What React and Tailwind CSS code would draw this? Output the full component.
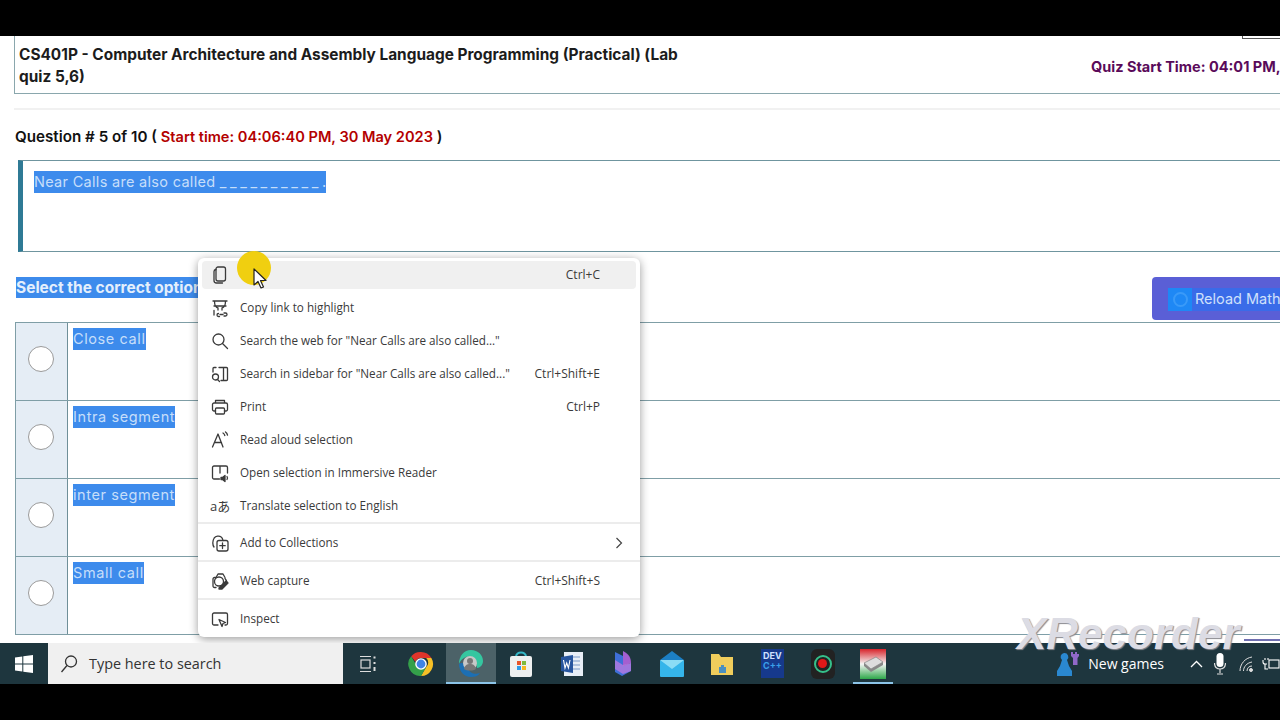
import React from "react";

const S = { fill: "none", stroke: "#3a3a3a", strokeWidth: 1.3, strokeLinecap: "round", strokeLinejoin: "round" };
const Ic = ({ children }) => <svg width="20" height="20" viewBox="0 0 20 20" {...S}>{children}</svg>;

const menuIcons = {
  copy: <Ic><rect x="6" y="2" width="9.500" height="14" rx="2" /><path d="M6 4.500c-1.200.2-2 1-2 2v9c0 1.500 1 2.500 2.500 2.500h6" /></Ic>,
  link: <Ic><path d="M3 3h14M4.500 3c0 4 1.500 6.500 3.500 7M15.500 3c0 4-1.500 6.500-3.500 7M8 10v2M12 10v2M4 8h12" /><path d="M4 12.500v4.500M10 16.500h3M8.500 15.500a1.500 1.500 0 1 0 0 3h1M14 15h1.500a1.500 1.500 0 0 1 0 3H14" /></Ic>,
  search: <Ic><circle cx="8.500" cy="8.500" r="5.500" /><path d="M12.500 12.500l5 5" /></Ic>,
  sidebar: <Ic><path d="M9 3.500h7.500a1 1 0 0 1 1 1v11a1 1 0 0 1-1 1H11M3 8V4.500a1 1 0 0 1 1-1h2M13.500 4v12" /><circle cx="5.500" cy="13" r="3" /><path d="M7.500 15.500l2 2" /></Ic>,
  print: <Ic><path d="M5.500 6V3.500h9V6M5.500 14H4a1.500 1.500 0 0 1-1.500-1.500v-5A1.500 1.500 0 0 1 4 6h12a1.500 1.500 0 0 1 1.500 1.500v5A1.500 1.500 0 0 1 16 14h-1.500" /><rect x="5.500" y="11" width="9" height="6" rx="1" /></Ic>,
  read: <Ic><path d="M2.500 17L8 4l5 13M4.500 12.500h7M13 3c1 .6 1.500 1.400 1.800 2.500M15.500 2c1.200.9 1.800 1.900 2 3.200" /></Ic>,
  reader: <Ic><path d="M9.500 16H4a1.500 1.500 0 0 1-1.500-1.500v-10A1.500 1.500 0 0 1 4 3h12a1.500 1.500 0 0 1 1.500 1.500V10M10 3v7" /><path d="M11 14.500h1.500l2.500-2v6l-2.500-2H11z" fill="#3a3a3a" /><path d="M17 13.500c.7 1 .7 2 0 3" /></Ic>,
  coll: <Ic><rect x="7" y="7.500" width="11" height="10.500" rx="2" /><path d="M12.500 10v5.500M9.800 12.700h5.400M4 14c-1.500-2-1.800-6 .2-9 1.500-2 5-2.500 7-1 1 .7 1.500 1.800 1.800 3.500" /></Ic>,
  capture: <Ic><path d="M6 16.500H4.500A1.500 1.500 0 0 1 3 15V8a1.500 1.500 0 0 1 1.500-1.500H6L8 3h5l2 3.500M15 7.500c1.500 1.500 2 3 2 4.500" /><circle cx="9" cy="10.500" r="4.500" /><path d="M9 17l7-7 2 2-6 6H9z" fill="#3a3a3a" /></Ic>,
  inspect: <Ic><path d="M8 16H4a1.500 1.500 0 0 1-1.500-1.500v-9A1.500 1.500 0 0 1 4 4h12a1.500 1.500 0 0 1 1.500 1.500v9A1.500 1.500 0 0 1 16 16h-1" /><path d="M9 10.500l6.500 3-2.500 1-1 3z" /></Ic>,
  translate: (
    <span className="w-[20px] text-center text-[13px] leading-[20px] text-[#3a3a3a] whitespace-nowrap font-['Open_Sans','Noto_Sans_CJK_JP',sans-serif]">aあ</span>
  ),
};

const Body = ({ icon, label, keys, arrow }) => (
  <>
    <div className="w-[36px] flex items-center justify-center shrink-0">{menuIcons[icon]}</div>
    <div className="ml-[2px] flex-1 whitespace-nowrap text-[11.700px]">{label}</div>
    {keys && <div className="pr-[36px] whitespace-nowrap">{keys}</div>}
    {arrow && (
      <svg width="8" height="12" viewBox="0 0 8 12" className="mr-[13px]" fill="none" stroke="#444" strokeWidth="1.200"><path d="M1.500 1l5 5-5 5" /></svg>
    )}
  </>
);

const Row = ({ highlight, ...p }) => (
  <div className="h-[33px] flex items-center">
    <div className={`mx-1 h-[28px] w-[434px] rounded-sm flex items-center ${highlight ? "bg-[#f0f0f0]" : ""}`}>
      <Body {...p} />
    </div>
  </div>
);

const Row2 = (p) => (
  <div className="h-[38px] border-t-2 border-[#ececec] flex items-center pt-px">
    <div className="mx-1 w-[434px] flex items-center">
      <Body {...p} />
    </div>
  </div>
);

const Option = ({ label }) => (
  <div className="h-[78px] flex border-b border-[#7f9ea6]">
    <div className="w-[52px] shrink-0 bg-[#e5edf5] border-r border-[#6f8f98] flex items-center justify-center pb-[6px] pr-px">
      <div className="w-[26px] h-[26px] rounded-full bg-white border-[1.500px] border-[#9a9a9a]" />
    </div>
    <div className="pl-[5px] pt-[5px] flex items-start">
      <span className="h-[22px] leading-[22px] bg-[#3d8bec] text-[#c6defa] text-[14.500px] tracking-[0.6px] whitespace-nowrap">{label}</span>
    </div>
  </div>
);

const Slot = ({ children, active, under, narrow }) => (
  <div className={`w-[50.200px] h-[41px] shrink-0 flex items-center justify-center relative ${active ? "bg-[#4c6268]" : ""}`}>
    {children}
    {under && <div className={`absolute bottom-0 h-[2.500px] bg-[#8cc4e8] ${narrow ? "left-[5px] right-[5px]" : "left-0 right-0"}`} />}
  </div>
);

export default function App() {
  return (
    <div className="w-[1280px] h-[720px] overflow-hidden bg-black flex flex-col font-['Inter','Liberation_Sans',sans-serif]">
      <div className="h-[36px] shrink-0 bg-black" />

      <div className="h-[607px] shrink-0 bg-white relative overflow-hidden">
        <div className="absolute right-0 top-0 w-[38px] h-[3px] border-l border-b border-[#555]" />

        <div className="ml-[14px] h-[58px] pt-[2px] border-l border-b border-[#8aa7ad] flex items-center overflow-hidden">
          <div className="w-[1076px] shrink-0 pl-[4px] text-[15.400px] leading-[22px] font-bold text-[#1c1c1c]">
            CS401P - Computer Architecture and Assembly Language Programming (Practical) (Lab<br />quiz 5,6)
          </div>
          <div className="shrink-0 mt-[2px] whitespace-nowrap text-[14.500px] font-bold text-[#5a0a5a]">Quiz Start Time: 04:01 PM,</div>
        </div>

        <div className="mt-[14px] h-[2px] bg-[#f1f1f1] ml-[14px]" />

        <div className="mt-[16px] h-[22px] pl-[15px] leading-[22px] text-[15.200px] font-semibold text-[#111] whitespace-nowrap">
          Question # 5 of 10 ( <span className="text-[14.600px] text-[#b30000]">Start time: 04:06:40 PM, 30 May 2023</span> )
        </div>

        <div className="mt-[12px] ml-[18px] h-[92px] border-l-[5px] border-[#2f7a95] border-t border-b border-t-[#6f959f] border-b-[#6f959f] pl-[11px] pt-[10px] flex items-start">
          <span className="h-[22px] leading-[22px] bg-[#3d8bec] text-[#c6defa] text-[14.500px] tracking-[0.3px] whitespace-nowrap">
            Near Calls are also called <span className="tracking-[3.600px]">__________</span>.
          </span>
        </div>

        <div className="mt-[25px] h-[45px] pl-[16px] flex items-start relative">
          <span className="h-[21px] leading-[21px] bg-[#3d8bec] text-[#e4effc] text-[15.500px] font-bold whitespace-nowrap">Select the correct option</span>
          <div className="absolute left-[1152px] top-0 w-[140px] h-[43px] rounded bg-[#5a5fd6] flex items-center pl-[16px] pt-px">
            <div className="flex items-center h-[23px] bg-[#3a6be8]">
              <div className="w-[24px] h-[23px] bg-[#1e88f5] flex items-center justify-center">
                <div className="w-[15px] h-[15px] rounded-full border-2 border-[#3a9af8]" />
              </div>
              <span className="ml-[3px] text-[#cfe0fb] text-[14.500px] whitespace-nowrap">Reload Math</span>
            </div>
          </div>
        </div>

        <div className="ml-[15px] border-t border-l border-[#7f9ea6]">
          <Option label="Close call" />
          <Option label="Intra segment" />
          <Option label="inter segment" />
          <Option label="Small call" />
        </div>

        {/* context menu */}
        <div className="absolute left-[198px] top-[222px] w-[442px] h-[379px] bg-white rounded-md shadow-[0_2px_10px_rgba(0,0,0,0.4)] text-[12px] text-[#3a3a3a] font-['Open_Sans',sans-serif]">
          <Row icon="copy" label="" keys="Ctrl+C" highlight />
          <Row icon="link" label="Copy link to highlight" />
          <Row icon="search" label={'Search the web for "Near Calls are also called..."'} />
          <Row icon="sidebar" label={'Search in sidebar for "Near Calls are also called..."'} keys="Ctrl+Shift+E" />
          <Row icon="print" label="Print" keys="Ctrl+P" />
          <Row icon="read" label="Read aloud selection" />
          <Row icon="reader" label="Open selection in Immersive Reader" />
          <Row icon="translate" label="Translate selection to English" />
          <Row2 icon="coll" label="Add to Collections" arrow />
          <Row2 icon="capture" label="Web capture" keys="Ctrl+Shift+S" />
          <Row2 icon="inspect" label="Inspect" />
        </div>

        {/* pointer highlight */}
        <div className="absolute left-[237px] top-[215px] w-[34px] h-[34px] rounded-full bg-[#f0cf10]" />
        <svg className="absolute left-[252px] top-[232px]" width="16" height="22" viewBox="0 0 16 22">
          <path d="M2 1v16l4-3.500 3 6.500 2.500-1-3-6.500h5.500z" fill="#fff" stroke="#222" strokeWidth="1.200" strokeLinejoin="round" />
        </svg>

        <div className="absolute right-0 bottom-[2px] w-[36px] h-[2px] bg-[#6f6fb0]" />
      </div>

      {/* taskbar */}
      <div className="h-[41px] shrink-0 bg-[#1e363e] flex items-center text-white relative">
        <div className="w-[48px] h-[41px] flex items-center justify-center">
          <svg width="18" height="18" viewBox="0 0 18 18" fill="#fff"><path d="M0 2.500l7.300-1v7H0zM8.300 1.300L18 0v8.500H8.300zM0 9.500h7.300v7l-7.300-1zM8.300 9.500H18V18l-9.700-1.300z" /></svg>
        </div>
        <div className="w-[295px] h-[41px] bg-[#f0f0f0] flex items-center pl-[12px] text-[#333] text-[14.400px] font-['Open_Sans',sans-serif]">
          <svg width="18" height="20" viewBox="0 0 18 20" fill="none" stroke="#333" strokeWidth="1.300"><circle cx="11" cy="7.500" r="5.500" /><path d="M7 11.500L1.500 18" /></svg>
          <span className="ml-[11px]">Type here to search</span>
        </div>
        <div className="w-[50px] flex justify-center">
          <svg width="18" height="20" viewBox="0 0 18 20" fill="none" stroke="#ddd" strokeWidth="1.200"><path d="M1 2.500h11M1 17.500h11" /><rect x="2" y="6" width="9" height="8" /><path d="M15.500 2.500v2M15.500 8v2M15.500 13v4" strokeWidth="2" /></svg>
        </div>
        <div className="w-[3px] shrink-0" />
        <Slot>
          <svg width="26" height="26" viewBox="0 0 26 26">
            <path d="M13 1a12 12 0 0 1 10.400 6H13a6 6 0 0 0-5.600 3.800L3.200 5.200A12 12 0 0 1 13 1z" fill="#e0352b" />
            <path d="M23.400 7A12 12 0 0 1 13 25l5.200-9a6 6 0 0 0 0-9z" fill="#f6c026" />
            <path d="M3.200 5.200l5.200 9a6 6 0 0 0 9.800 1.800L13 25A12 12 0 0 1 3.200 5.200z" fill="#34a04a" />
            <circle cx="13" cy="13" r="5.800" fill="#fff" /><circle cx="13" cy="13" r="4.400" fill="#3f83e6" />
          </svg>
        </Slot>
        <Slot active under>
          <svg width="28" height="30" viewBox="0 0 28 30">
            <path d="M14 1c7 0 12 5 12 11 0 4-3 7-6 7l-1-6C18 8 12 6 7 9c-2 1-4 3-5 6C2 7 7 1 14 1z" fill="#35c6a0" />
            <path d="M2 15c0 7 5 13 12 13 4 0 7-1 9-4-5 2-11 0-12-5-1-3-5-7-9-4z" fill="#1c6fb4" />
            <circle cx="13" cy="14" r="7" fill="#c8c8c8" /><circle cx="13" cy="12" r="3" fill="#777" /><path d="M7 20c1-4 3-5 6-5s5 1 6 5c-3 2-9 2-12 0z" fill="#777" />
          </svg>
        </Slot>
        <Slot>
          <svg width="24" height="28" viewBox="0 0 24 28">
            <path d="M7 7c0-6 10-6 10 0" fill="none" stroke="#35b8c8" strokeWidth="2" />
            <rect x="1" y="6" width="22" height="21" rx="2" fill="#eef0f0" />
            <rect x="8" y="11" width="4" height="4" fill="#e8552a" /><rect x="13" y="11" width="4" height="4" fill="#7fba3a" /><rect x="8" y="16" width="4" height="4" fill="#2e9be8" /><rect x="13" y="16" width="4" height="4" fill="#f5b921" />
          </svg>
        </Slot>
        <Slot>
          <svg width="24" height="26" viewBox="0 0 24 26">
            <rect x="4" y="1" width="19" height="24" fill="#e8eef6" /><path d="M8 6h12M8 10h12M8 14h12M8 18h12" stroke="#7a9ac8" />
            <path d="M1 6l12-2v18l-12-2z" fill="#27559e" /><path d="M3.500 9l1.500 8 1.700-5 1.700 5L10 9" fill="none" stroke="#fff" strokeWidth="1.100" />
          </svg>
        </Slot>
        <Slot>
          <svg width="20" height="28" viewBox="0 0 20 28">
            <path d="M3 2l8 4v10l8-3v8l-9 5-7-4z" fill="#3f6fd8" /><path d="M11 1c6 3 8 7 8 12l-8 3z" fill="#a55fd0" /><path d="M3 10l8 5 8-2v8l-8 3-8-5z" fill="#c07ae0" opacity=".75" />
          </svg>
        </Slot>
        <Slot>
          <svg width="26" height="28" viewBox="0 0 26 28">
            <path d="M13 1l12 9H1z" fill="#1c7fc4" /><rect x="1" y="10" width="24" height="17" rx="1" fill="#35b5ea" /><path d="M1 10l12 9 12-9" fill="#8bdcf5" />
          </svg>
        </Slot>
        <Slot>
          <svg width="24" height="24" viewBox="0 0 24 24">
            <path d="M1 2h8l2 3h12v18H1z" fill="#f0cd5c" /><rect x="9" y="15" width="7" height="6" fill="#4a8fc0" /><rect x="11" y="13" width="3" height="3" fill="#4a8fc0" />
          </svg>
        </Slot>
        <Slot>
          <div className="w-[23px] h-[29px] bg-[#16398c] flex flex-col items-center text-[9px] leading-[10px] font-bold text-[#cfe0ff]">
            <span className="mt-[2px]">DEV</span>
            <span className="text-[#3aa0e8]">C++</span>
          </div>
        </Slot>
        <Slot>
          <div className="w-[24px] h-[30px] rounded-md bg-[#222] flex items-center justify-center">
            <div className="w-[18px] h-[18px] rounded-full border-2 border-[#35c08a] flex items-center justify-center">
              <div className="w-[9px] h-[9px] rounded-full bg-[#e01818]" />
            </div>
          </div>
        </Slot>
        <Slot under narrow>
          <svg width="26" height="30" viewBox="0 0 26 30">
            <defs>
              <linearGradient id="appg" x1="0" y1="0" x2="0" y2="1">
                <stop offset="0" stopColor="#d8232a" /><stop offset=".5" stopColor="#f4f4f4" /><stop offset="1" stopColor="#2ea84a" />
              </linearGradient>
            </defs>
            <rect width="26" height="30" fill="url(#appg)" />
            <path d="M4 14l12-6 7 5-12 7z" fill="#ddd" stroke="#777" strokeWidth=".6" /><path d="M4 14v3l7 6v-3zM11 20v3l12-7v-3z" fill="#888" />
          </svg>
        </Slot>

        <div className="ml-auto flex items-center">
          <svg width="24" height="28" viewBox="0 0 24 28">
            <path d="M8 3a4 4 0 0 1 3 7l2 6 3 5v5H1v-5l3-5 2-6a4 4 0 0 1 2-7z" fill="#2a88d0" />
            <path d="M15 2h2v2h2V2h2v2h2v2l-1.500 2v7H17V8l-2-2z" fill="#9068c8" />
          </svg>
          <span className="ml-[8px] text-[14px] leading-[18px] text-white whitespace-nowrap font-['Open_Sans',sans-serif]">New games</span>
          <svg className="ml-[26px]" width="13" height="8" viewBox="0 0 13 8" fill="none" stroke="#fff" strokeWidth="1.300"><path d="M1 7l5.500-5.500L12 7" /></svg>
          <svg className="ml-[11px]" width="12" height="22" viewBox="0 0 12 22"><rect x="2.500" y="0" width="7" height="14" rx="3.500" fill="#fff" /><path d="M0.500 10c0 4 2 6 5.500 6s5.500-2 5.500-6M6 16v4M3 21h6" fill="none" stroke="#ddd" strokeWidth="1.200" /></svg>
          <svg className="ml-[13px]" width="14" height="16" viewBox="0 0 14 16" fill="none" stroke="#ddd" strokeWidth="1"><path d="M1 15C1 8 6 2 13 1M4.500 15c0-4 3-8 8.500-9M8 15c0-3 2-5 5-5" /><circle cx="12" cy="14" r="1.500" fill="#ddd" /></svg>
          <svg className="ml-[9px]" width="18" height="14" viewBox="0 0 18 14" fill="none" stroke="#fff" strokeWidth="1.100"><rect x="7" y="3" width="10" height="8" /><path d="M1 3v2a2 2 0 0 0 2 2h2M3 1v2M6 1v2M3 7v5h3" /></svg>
        </div>
      </div>

      <div className="flex-1 bg-black" />

      <div className="absolute left-[1017px] top-[617px] text-[44px] leading-[34px] font-extrabold italic text-[#dcdce4] whitespace-nowrap [text-shadow:1px_1px_1px_#8a8a90] font-['Liberation_Sans',sans-serif]">
        XRecorder
      </div>
    </div>
  );
}
